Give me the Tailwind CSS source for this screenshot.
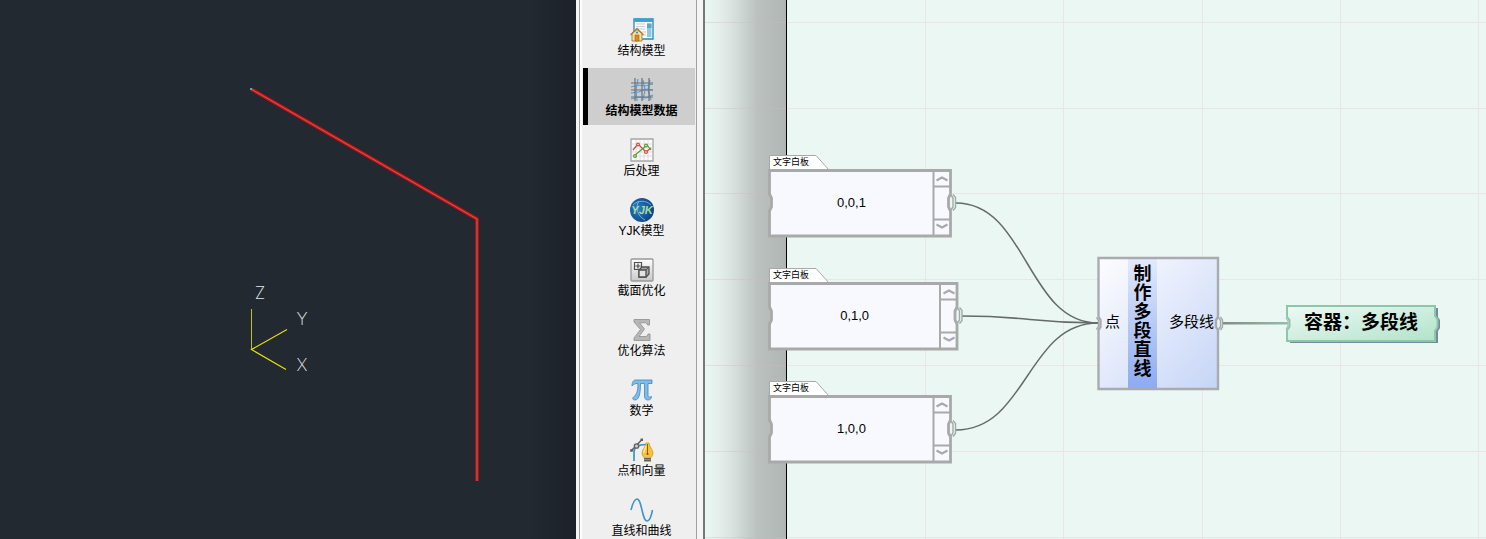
<!DOCTYPE html>
<html lang="zh-CN">
<head>
<meta charset="utf-8">
<title>制作多段直线</title>
<script src="https://cdn.jsdelivr.net/npm/@tailwindcss/browser@4"></script>
</head>
<body class="font-['Liberation_Sans','Noto_Sans_CJK_SC',sans-serif] text-black">
<main class="flex h-screen overflow-hidden">

  <!-- 3D viewport -->
  <section aria-label="三维视图" class="w-[576px] shrink-0 bg-linear-to-r from-[#222930] from-92% to-[#1c2128]">
    <svg class="block h-full w-full" fill="none">
      <path d="M251 89 477 219V481" stroke="#d20d10" stroke-width="3.4"/>
      <path d="M251 89 477 219V481" stroke="#b07070" stroke-width=".9"/>
      <path d="M250 89h2" stroke="#22e6e6" stroke-width="1.500"/>
      <path d="M251.500 309V349.500" stroke="#bdbd2c"/>
      <path d="M287 329.500 251.500 349.500 286 369.500" stroke="#e2e20a" stroke-width="1.200"/>
      <g fill="#e4e8ea" class="font-['Inter'] text-[17px] font-extralight" text-anchor="middle">
        <text x="260" y="299">Z</text>
        <text x="302" y="325">Y</text>
        <text x="302" y="371">X</text>
      </g>
    </svg>
  </section>

  <!-- Category toolbar -->
  <div class="flex w-[129px] shrink-0 border-r-2 border-[#777] bg-[#f5f5f5] pl-[3px]">
    <nav aria-label="分类" class="mr-[6px] flex grow flex-col gap-[3px] border-x border-[#a0a0a0] bg-[#efefef] pt-2 shadow-[inset_2px_0_#fcfcfc] pl-[3px] pr-px">
      <button class="flex h-[57px] shrink-0 flex-col items-center border-l-[5px] border-transparent pt-[10px] text-[12px] leading-[18px]">
        <svg class="size-6 shrink-0" viewBox="0 0 24 24">
          <path d="M4 1h19v20H4z" fill="#fafcfd" stroke="#2488b5" stroke-width="1.300"/>
          <path d="M4 1h19v3H4z" fill="#37a4dc"/>
          <path d="M6 6h9M6 8.500h9M6 11h9M12 14h4M13 17h3" stroke="#c3ced7"/>
          <path d="M17 5.500h4.500V19H17z" fill="#8fc8e4"/><path d="M17 5.500h4.500V10H17z" fill="#5aa8cf"/>
          <path d="M2 15.500 7 11.500l5 4V23H2z" fill="#f6dfae" stroke="#b7822f"/>
          <path d="M.5 17 7 10.500 13.500 17" fill="none" stroke="#b07c36" stroke-width="1.400"/>
          <path d="M5 17h4v6H5z" fill="#d88d16" stroke="#9e6414" stroke-width=".6"/>
          <circle cx="7" cy="14.500" r="1" fill="#2c87b9"/>
        </svg>
        <span>结构模型</span>
      </button>
      <button aria-current="true" class="flex h-[57px] shrink-0 flex-col items-center border-l-[5px] border-black bg-[#cecece] pt-[10px] text-[12px] font-bold leading-[18px]">
        <svg class="size-6 shrink-0" viewBox="0 0 24 24" fill="none">
          <path d="m1 9 7-2 7 1 8-2M1 15l8-1 6-3 8 1M1 21l8-2 7 1 7-3M8 1 6 12l1 11M13 2l2 10-2 10M20 2l-2 10 3 10" stroke="#5f9bd3" stroke-width="1.200"/>
          <path d="M1 5h22M1 12h22M1 19h22M5 0v23M12 0v23M19 0v23" stroke="#6d7378" stroke-width="1.200"/>
        </svg>
        <span>结构模型数据</span>
      </button>
      <button class="flex h-[57px] shrink-0 flex-col items-center border-l-[5px] border-transparent pt-[10px] text-[12px] leading-[18px]">
        <svg class="size-6 shrink-0" viewBox="0 0 24 24" fill="none">
          <path d="M1 1h22v22H1z" fill="#fbfbfb" stroke="#a7a7a7" stroke-width="1.300"/>
          <path d="M2 6h20M2 10h20M2 14h20M2 18h20M6 2v20M10 2v20M14 2v20M18 2v20" stroke="#dedede"/>
          <path d="m3 12 5-6 8 8 5-4" stroke="#d8483e" stroke-width="1.200"/>
          <path d="M4 18 17 7l4 5" stroke="#559a2e" stroke-width="1.200"/>
          <g stroke-width="1.200" fill="#fff"><circle cx="8" cy="6.500" r="1.400" stroke="#d8483e"/><circle cx="16" cy="14" r="1.400" stroke="#d8483e"/><circle cx="5" cy="18" r="1.400" stroke="#559a2e"/><circle cx="16" cy="7.500" r="1.400" stroke="#559a2e"/></g>
        </svg>
        <span>后处理</span>
      </button>
      <button class="flex h-[57px] shrink-0 flex-col items-center border-l-[5px] border-transparent pt-[10px] text-[12px] leading-[18px]">
        <svg class="size-6 shrink-0" viewBox="0 0 24 24" fill="none">
          <defs><radialGradient id="globe" cx=".35" cy=".45" r=".7"><stop stop-color="#2b7fc4"/><stop offset="1" stop-color="#093f7f"/></radialGradient></defs>
          <circle cx="12" cy="12" r="12" fill="url(#globe)"/>
          <path d="M3 7c5-5 13-5 18 0M9 3C5 9 7 18 15 22" stroke="#8cc4e2" stroke-width=".8"/>
          <text x="12" y="16" text-anchor="middle" fill="#a6dd9a" class="text-[11px] font-bold italic">YJK</text>
        </svg>
        <span>YJK模型</span>
      </button>
      <button class="flex h-[57px] shrink-0 flex-col items-center border-l-[5px] border-transparent pt-[10px] text-[12px] leading-[18px]">
        <svg class="size-6 shrink-0" viewBox="0 0 24 24" fill="none">
          <defs><linearGradient id="tile" x2="0" y2="1"><stop stop-color="#fff"/><stop offset="1" stop-color="#c9c9c9"/></linearGradient></defs>
          <rect x="1" y="1" width="22" height="22" rx="1" fill="url(#tile)" stroke="#999" stroke-width="1.300"/>
          <path d="M4.500 4.500h7v7h-7zM8 5.500v5M5.500 8h5" stroke="#505050" stroke-width="1.200"/>
          <path d="m9 12 3-3h7v7l-3 3H9z" fill="#aaa" stroke="#505050" stroke-width="1.300"/>
          <path d="M9 12h7v7H9z" fill="#e3e3e3" stroke="#505050" stroke-width="1.300"/><path d="m16 12 3-3" stroke="#505050"/>
        </svg>
        <span>截面优化</span>
      </button>
      <button class="flex h-[57px] shrink-0 flex-col items-center border-l-[5px] border-transparent pt-[10px] text-[12px] leading-[18px]">
        <svg class="size-6 shrink-0" viewBox="0 0 24 24">
          <path d="M4 1.500h15.500V7h-2c-.3-1.500-1-2.200-3-2.200h-5L14.500 11 9 18.500h6c2 0 2.700-.8 3-2.500h2v6.500H4V20l6.500-8.500L4 4z" fill="#b7b7b7" stroke="#8e8e8e" stroke-width=".8"/>
        </svg>
        <span>优化算法</span>
      </button>
      <button class="flex h-[57px] shrink-0 flex-col items-center border-l-[5px] border-transparent pt-[10px] text-[12px] leading-[18px]">
        <svg class="size-6 shrink-0" viewBox="0 0 24 24">
          <path d="M5.500 2H22v3.500h-4V17c0 2 .8 2.800 3.500 1.500-.2 2.500-1.500 3.500-3.500 3.500-2.500 0-3.500-1.500-3.500-4V5.500H10.500C10.500 14 9.500 22 5 22c-2 0-3-1.500-1.500-3C6.500 17 8 13 8 5.500 5 5.500 3.500 6 2 8 2 4 3.500 2 5.500 2z" fill="#7dbdec" stroke="#3e86bd" stroke-width=".8"/>
        </svg>
        <span>数学</span>
      </button>
      <button class="flex h-[57px] shrink-0 flex-col items-center border-l-[5px] border-transparent pt-[10px] text-[12px] leading-[18px]">
        <svg class="size-6 shrink-0" viewBox="0 0 24 24" fill="none">
          <path d="M4 23V14C4 9 8 6.500 16 6.500" stroke="#3e91c4" stroke-width="1.700"/>
          <path d="M1 13 12 1.500" stroke="#606060" stroke-width="1.500"/>
          <circle cx="6.500" cy="8" r="2.200" fill="#ccc" stroke="#606060" stroke-width="1.300"/>
          <path d="M10.500 .5h2.500V3h-2.500zM.2 11.200h2.600v2.600H.2z" fill="#606060"/>
          <path d="M16 5h3c.5 4 4 7 4 10 0 2-1.500 4-2.500 5h-6c-1-1-2.500-3-2.500-5 0-3 3.500-6 4-10z" fill="#f5c342" stroke="#d09a22" stroke-width=".8"/>
          <path d="M17.500 6v10" stroke="#8a5e0d"/><path d="M15.800 8c-.5 3-2 5-2 7" stroke="#fff0a8" stroke-width="1.200"/><circle cx="17.500" cy="16" r="1.100" fill="#7a530e"/>
          <path d="M14 20h7v3.500h-7z" fill="#626262"/><path d="M14 21.500h7" stroke="#aaa" stroke-width=".6"/>
        </svg>
        <span>点和向量</span>
      </button>
      <button class="flex h-[57px] shrink-0 flex-col items-center border-l-[5px] border-transparent pt-[10px] text-[12px] leading-[18px]">
        <svg class="size-6 shrink-0" viewBox="0 0 24 24" fill="none">
          <path d="M1 12C3 4 4.500 1 7 1c5 0 5 22 10 22 2.500 0 4-3 5.500-11" stroke="#3f93c6" stroke-width="1.600"/>
        </svg>
        <span>直线和曲线</span>
      </button>
    </nav>
  </div>

  <!-- Node canvas: nodes and wires share one coordinate space -->
  <section aria-label="节点画布" class="relative min-w-0 grow overflow-hidden bg-[#eaf7f3]">
    <div class="absolute inset-y-0 left-0 w-[82px] border-r border-black bg-[linear-gradient(to_right,#eaf7f3,#e4efec_18%,#d3dcd9_40%,#bac1bf_65%,#b1b6b4)]"></div>
    <svg class="absolute inset-0 h-full w-full" fill="none">
      <g stroke="#ece5e4">
        <path d="M220.500 0v2000M358.500 0v2000M497.500 0v2000M635.500 0v2000M773.500 0v2000"/>
        <path d="M82 22.500h3000M82 108.500h3000M82 193.500h3000M82 279.500h3000M82 365.500h3000M82 451.500h3000M82 537.500h3000"/>
        <path d="M0 22.500h81M0 108.500h81M0 193.500h81M0 279.500h81M0 365.500h81M0 451.500h81M0 537.500h81" stroke="#d8b8b8" stroke-opacity=".35"/>
      </g>
      <g stroke="#666b69" stroke-width="1.500">
        <path d="M251 203C322 203 322 323 393 323"/>
        <path d="M257 316C325 316 325 323 393 323"/>
        <path d="M251 430C322 430 322 323 393 323"/>
      </g>
      <defs><linearGradient id="link" gradientUnits="userSpaceOnUse" x1="518" y1="0" x2="583" y2="0"><stop stop-color="#858a89"/><stop offset="1" stop-color="#92bfaa"/></linearGradient></defs>
      <path d="M518 322h65v2.500h-65z" fill="url(#link)"/>
    </svg>

    <!-- Text panels -->
    <article class="absolute left-[62px] top-[155px] h-[84px] w-[194px]">
      <svg class="absolute inset-0 h-full w-full" fill="none" stroke="#a9a9a9">
        <path d="M2.500 15V.5H49L62 15" fill="#fff"/>
        <path d="M2.500 15.500H183.500V39l-2 4v9l2 4V81H2.500V56l2-4V43l-2-4z" fill="#f8f9ff" stroke-width="2.800"/>
        <path d="M166.500 15V81M166.500 31.500H183M166.500 64.500H183" stroke-width="2"/>
        <path d="m184 40 2 3v9l-2 3M186 39.500l2.500 3v10l-2.500 3" stroke="#a2aaa7" stroke-width="1.400"/>
      </svg>
      <div class="relative flex h-[14px] items-center pl-[6px] text-[9px] leading-3"><h2>文字白板</h2></div>
      <div class="relative flex h-[67px] w-[183px]">
        <input aria-label="文字白板 1" value="0,0,1" class="min-w-0 grow bg-transparent pl-[6px] pr-[5px] text-center text-[13px] outline-none">
        <div class="flex w-[17px] flex-col justify-between py-[2px]">
          <button aria-label="向上" class="grid h-4 place-items-center"><svg class="h-2 w-3" viewBox="0 0 12 8" fill="none" stroke="#a9a9a9" stroke-width="2.200"><path d="m.5 5.500 5.500-3 5.500 3"/></svg></button>
          <button aria-label="向下" class="grid h-4 place-items-center"><svg class="h-2 w-3" viewBox="0 0 12 8" fill="none" stroke="#a9a9a9" stroke-width="2.200"><path d="m.5 2.500 5.500 3 5.500-3"/></svg></button>
        </div>
      </div>
    </article>

    <article class="absolute left-[62px] top-[268px] h-[84px] w-[200px]">
      <svg class="absolute inset-0 h-full w-full" fill="none" stroke="#a9a9a9">
        <path d="M2.500 15V.5H49L62 15" fill="#fff"/>
        <path d="M2.500 15.500H190V39l-2 4v9l2 4V81H2.500V56l2-4V43l-2-4z" fill="#f8f9ff" stroke-width="2.800"/>
        <path d="M173 15V81M173 31.500H190M173 64.500H190" stroke-width="2"/>
        <path d="m190.500 40 2 3v9l-2 3M192.500 39.500l2.500 3v10l-2.500 3" stroke="#a2aaa7" stroke-width="1.400"/>
      </svg>
      <div class="relative flex h-[14px] items-center pl-[6px] text-[9px] leading-3"><h2>文字白板</h2></div>
      <div class="relative flex h-[67px] w-[190px]">
        <input aria-label="文字白板 2" value="0,1,0" class="min-w-0 grow bg-transparent pl-[6px] pr-[5px] text-center text-[13px] outline-none">
        <div class="flex w-[17px] flex-col justify-between py-[2px]">
          <button aria-label="向上" class="grid h-4 place-items-center"><svg class="h-2 w-3" viewBox="0 0 12 8" fill="none" stroke="#a9a9a9" stroke-width="2.200"><path d="m.5 5.500 5.500-3 5.500 3"/></svg></button>
          <button aria-label="向下" class="grid h-4 place-items-center"><svg class="h-2 w-3" viewBox="0 0 12 8" fill="none" stroke="#a9a9a9" stroke-width="2.200"><path d="m.5 2.500 5.500 3 5.500-3"/></svg></button>
        </div>
      </div>
    </article>

    <article class="absolute left-[62px] top-[381px] h-[84px] w-[194px]">
      <svg class="absolute inset-0 h-full w-full" fill="none" stroke="#a9a9a9">
        <path d="M2.500 15V.5H49L62 15" fill="#fff"/>
        <path d="M2.500 15.500H183.500V39l-2 4v9l2 4V81H2.500V56l2-4V43l-2-4z" fill="#f8f9ff" stroke-width="2.800"/>
        <path d="M166.500 15V81M166.500 31.500H183M166.500 64.500H183" stroke-width="2"/>
        <path d="m184 40 2 3v9l-2 3M186 39.500l2.500 3v10l-2.500 3" stroke="#a2aaa7" stroke-width="1.400"/>
      </svg>
      <div class="relative flex h-[14px] items-center pl-[6px] text-[9px] leading-3"><h2>文字白板</h2></div>
      <div class="relative flex h-[67px] w-[183px]">
        <input aria-label="文字白板 3" value="1,0,0" class="min-w-0 grow bg-transparent pl-[6px] pr-[5px] text-center text-[13px] outline-none">
        <div class="flex w-[17px] flex-col justify-between py-[2px]">
          <button aria-label="向上" class="grid h-4 place-items-center"><svg class="h-2 w-3" viewBox="0 0 12 8" fill="none" stroke="#a9a9a9" stroke-width="2.200"><path d="m.5 5.500 5.500-3 5.500 3"/></svg></button>
          <button aria-label="向下" class="grid h-4 place-items-center"><svg class="h-2 w-3" viewBox="0 0 12 8" fill="none" stroke="#a9a9a9" stroke-width="2.200"><path d="m.5 2.500 5.500 3 5.500-3"/></svg></button>
        </div>
      </div>
    </article>

    <!-- Polyline component -->
    <article class="absolute left-[391px] top-[256px] h-[136px] w-[130px]">
      <svg class="absolute inset-0 h-full w-full" fill="none">
        <defs>
          <linearGradient id="body" x2="1" y2="1"><stop stop-color="#fdfdff"/><stop offset="1" stop-color="#c6d5f6"/></linearGradient>
          <linearGradient id="band" x2="0" y2="1"><stop stop-color="#e3ebfc"/><stop offset="1" stop-color="#8caaf0"/></linearGradient>
        </defs>
        <path d="M2.500 2H122V61l-2 3v7l2 3V133H2.500V74l2-3V64l-2-3z" fill="url(#body)"/>
        <path d="M32 2h29v131H32z" fill="url(#band)"/>
        <path d="M2.500 2H122V61l-2 3v7l2 3V133H2.500V74l2-3V64l-2-3z" stroke="#a9abae" stroke-width="2.400"/>
        <path d="m.5 61.500 2 3v6l-2 3M122.500 61.500l2 3v6l-2 3M124.500 61l2 3v7l-2 3" stroke="#a2aaa7" stroke-width="1.400"/>
      </svg>
      <div class="relative flex h-[132px] items-center">
        <span class="w-8 pl-[9px] text-[15px] leading-5">点</span>
        <div class="flex w-[29px] justify-center"><h2 class="w-[18px] break-all text-center text-[18px] font-bold leading-[19px]">制作多段直线</h2></div>
        <span class="grow pr-[12px] text-right text-[15px] leading-5">多段线</span>
      </div>
    </article>

    <!-- Polyline container -->
    <article class="absolute left-[580px] top-[304px] h-10 w-[158px]">
      <svg class="absolute inset-0 h-full w-full" fill="none">
        <defs><linearGradient id="mint" x2="1" y2="1"><stop stop-color="#eef9f4"/><stop offset="1" stop-color="#b1e3ca"/></linearGradient></defs>
        <path d="M5 4H153V13l2 3v8l-2 3V39H5z" fill="#77899a"/>
        <path d="M2 2H150V12l2.500 3v8l-2.500 4V37H2V26l2.500-3V16L2 13z" fill="url(#mint)" stroke="#8dc7ab" stroke-width="2"/>
        <path d="m1 14 2 3v5l-2 3" stroke="#9fc4b3" stroke-width="1.200"/>
      </svg>
      <h2 class="relative pl-[19px] text-[19px] font-bold leading-[38px] whitespace-nowrap">容器：多段线</h2>
    </article>
  </section>
</main>
</body>
</html>
